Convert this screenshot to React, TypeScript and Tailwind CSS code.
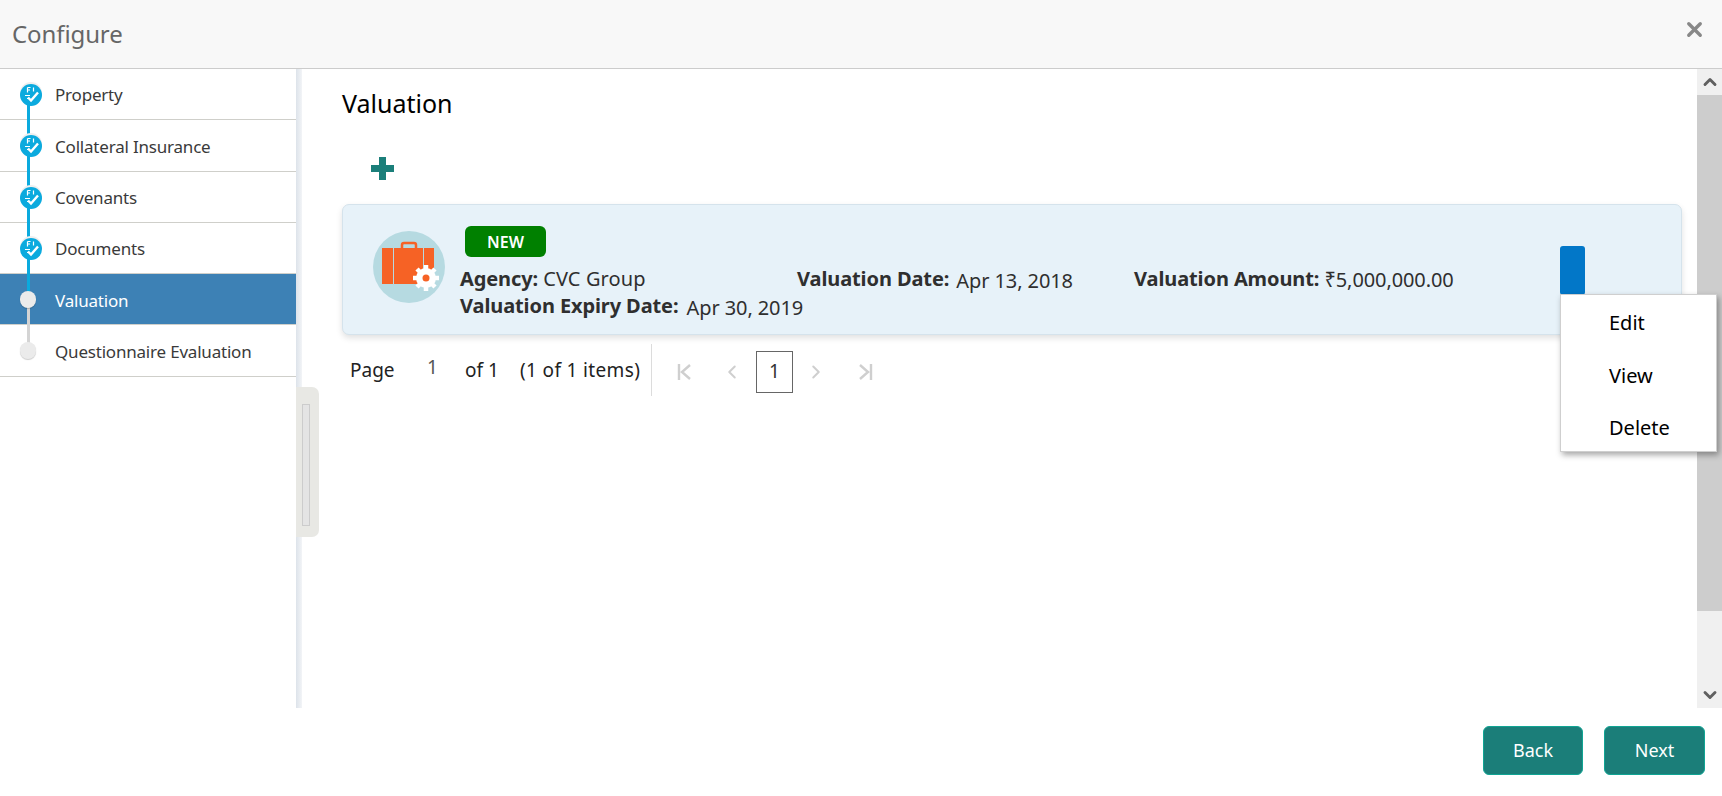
import { ChevronLeft, ChevronRight, ChevronUp, ChevronDown, X } from 'lucide-react';

const FONT = "font-['Noto_Sans',sans-serif]";

const STEPS = [
  { name: 'Property', done: true },
  { name: 'Collateral Insurance', done: true },
  { name: 'Covenants', done: true },
  { name: 'Documents', done: true },
  { name: 'Valuation', done: false, active: true },
  { name: 'Questionnaire Evaluation', done: false },
];

const DoneIcon = () => (
  <svg width="24" height="26" viewBox="0 0 24 26" className="block">
    <circle cx="12" cy="12" r="11" fill="#efefef" />
    <circle cx="12" cy="14" r="11" fill="#0baade" />
    <path d="M8.5 6.5h3M8.5 6.5v5M8.5 9h2.5M14.5 6.5v4" stroke="#fff" strokeWidth="1.2" fill="none" />
    <path d="M6 14.5h5M8 17.5h3" stroke="#fff" strokeWidth="1.2" fill="none" />
    <path d="M9 16.5l3 3 7-8" stroke="#fff" strokeWidth="2.4" fill="none" />
  </svg>
);

const PendingDot = () => (
  <span className="block w-[16px] h-[17px] rounded-full bg-[#ebebeb] shadow-[0_1px_1px_rgba(0,0,0,0.2)]"></span>
);

const Sidebar = () => (
  <aside className="relative w-[296px] shrink-0 bg-white">
    {STEPS.map((step, i) => (
      <div
        key={step.name}
        className={`relative flex items-center h-[51.3px] border-b border-[#cfcfca] ${step.active ? 'bg-[#3d81b5] text-white' : 'text-[#3a3a3a]'}`}
      >
        {i < 5 && (
          <span className={`absolute left-[27px] top-[26px] bottom-[-26px] w-[3px] z-10 ${step.done ? 'bg-[#0baade]' : 'bg-[#d4d4d4]'}`}></span>
        )}
        {i === 3 && <span className="absolute left-[27px] top-[26px] h-[27px] w-[3px] z-10 bg-[#0baade]"></span>}
        <div className="relative z-20 w-[55px] pl-[19px] shrink-0">
          {step.done ? <DoneIcon /> : <div className="ml-[1px]"><PendingDot /></div>}
        </div>
        <span className="text-[17px] tracking-[-0.2px] mt-[2px]">{step.name}</span>
      </div>
    ))}
  </aside>
);

const BriefcaseLogo = () => (
  <svg width="72" height="72" viewBox="0 0 72 72" className="shrink-0">
    <circle cx="36" cy="36" r="36" fill="#b6dae1" />
    <path d="M29 17v-3a2 2 0 0 1 2-2h10a2 2 0 0 1 2 2v3" fill="none" stroke="#f66225" strokeWidth="2.5" />
    <rect x="9" y="17" width="11" height="36" fill="#f66225" />
    <rect x="21" y="17" width="29" height="36" fill="#f66225" />
    <rect x="51" y="17" width="10" height="36" fill="#f66225" />
    <circle cx="53" cy="47" r="10" fill="#fff" />
    <g stroke="#fff" strokeWidth="4.5">
      <path d="M53 34v26M40 47h26M44 38l18 18M62 38L44 56" />
    </g>
    <circle cx="53" cy="47" r="3.5" fill="#f66225" />
  </svg>
);

const FirstIcon = () => (
  <svg width="16" height="18" viewBox="0 0 16 18" fill="none" stroke="#cfcfcf" strokeWidth="2.4">
    <path d="M2 1v16M13 2L5 9l8 7" />
  </svg>
);

const LastIcon = () => (
  <svg width="16" height="18" viewBox="0 0 16 18" fill="none" stroke="#cfcfcf" strokeWidth="2.4">
    <path d="M14 1v16M3 2l8 7-8 7" />
  </svg>
);

const Pager = () => (
  <div className="flex items-center h-[52px] mt-[9px] text-[#222] text-[19px]">
    <span className="ml-[8px] w-[77px]">Page</span>
    <span className="w-[38px] text-[#555] -mt-[6px]">1</span>
    <span className="w-[55px]">of 1</span>
    <span className="w-[131px] whitespace-nowrap tracking-[0.35px]">(1 of 1 items)</span>
    <div className="h-[52px] pt-[3px] border-l border-[#dcdcdc] flex items-center pl-[25px]">
      <FirstIcon />
      <ChevronLeft size={22} strokeWidth={2.2} color="#cfcfcf" className="ml-[28px]" />
      <span className="flex items-center justify-center w-[37px] h-[42px] ml-[13px] border border-[#666] text-[#333] text-[19px]">1</span>
      <ChevronRight size={22} strokeWidth={2.2} color="#cfcfcf" className="ml-[12px]" />
      <span className="ml-[30px]"><LastIcon /></span>
    </div>
  </div>
);

const ValuationCard = () => (
  <div className="relative flex h-[131px] w-[1340px] pl-[30px] bg-[#e7f2f9] border border-[#d5e3ec] rounded-[7px] shadow-[0_3px_6px_rgba(0,0,0,0.12)]">
    <div className="pt-[26px]">
      <BriefcaseLogo />
    </div>
    <div className="ml-[15px] pt-[21px] text-[#2f2f2f] text-[20px]">
      <span className="block ml-[5px] w-[81px] h-[31px] leading-[33px] rounded-[6px] bg-[#008000] text-white text-center text-[16px] font-semibold">NEW</span>
      <div className="flex mt-[8px] h-[28px] leading-[28px] whitespace-nowrap tracking-[-0.1px]">
        <div className="w-[337px]"><b>Agency:</b> <span className="tracking-[0.1px]">CVC Group</span></div>
        <div className="w-[337px]"><b>Valuation Date:</b> <span className="ml-[2px] align-[-2px]">Apr 13, 2018</span></div>
        <div><b>Valuation Amount:</b> <span className="align-[-1px]">₹5,000,000.00</span></div>
      </div>
      <div className="h-[26px] leading-[26px] whitespace-nowrap tracking-[-0.1px]"><b>Valuation Expiry Date:</b> <span className="ml-[3px] align-[-2px]">Apr 30, 2019</span></div>
    </div>
    <button className="absolute left-[1217px] top-[41px] w-[25px] h-[49px] rounded-[3px] bg-[#0277c8]"></button>
  </div>
);

const ActionMenu = () => (
  <div className="absolute left-[1560px] top-[294px] z-30 w-[157px] h-[158px] pt-[3px] bg-white border border-[#cfcfcf] shadow-[2px_3px_6px_rgba(0,0,0,0.35)] text-black text-[20px]">
    {['Edit', 'View', 'Delete'].map((item) => (
      <div key={item} className="h-[52.5px] leading-[50px] pl-[48px]">{item}</div>
    ))}
  </div>
);

const Scrollbar = () => (
  <div className="flex flex-col w-[25px] shrink-0 bg-[#f0f0f0]">
    <div className="flex items-center justify-center h-[26px] text-[#606060]">
      <ChevronUp size={20} strokeWidth={3.5} />
    </div>
    <div className="h-[516px] bg-[#cdcdcd]"></div>
    <div className="flex-1"></div>
    <div className="flex items-center justify-center h-[26px] text-[#606060]">
      <ChevronDown size={20} strokeWidth={3.5} />
    </div>
  </div>
);

export default function App() {
  return (
    <div className={`relative flex flex-col w-[1722px] h-[796px] overflow-hidden bg-white ${FONT}`}>
      <header className="flex items-center justify-between h-[69px] shrink-0 pl-[12px] pr-[16px] bg-[#f8f8f8] border-b border-[#cccccc]">
        <h1 className="text-[24px] tracking-[-0.1px] text-[#666]">Configure</h1>
        <X size={23} strokeWidth={3.5} color="#888" className="-mt-[10px]" />
      </header>

      <div className="relative flex flex-1 min-h-0">
        <Sidebar />
        <div className="w-[6px] shrink-0 bg-gradient-to-r from-[#dde3ea] to-[#f2f4f7]"></div>
        <main className="flex-1 pl-[40px]">
          <h2 className="text-[25px] leading-[36px] mt-[16px] text-black">Valuation</h2>
          <div className="mt-[36px] mb-[24px] ml-[29px] h-[23px] w-[23px] relative">
            <span className="absolute left-0 top-[8px] w-[23px] h-[7px] bg-[#1b7f7a]"></span>
            <span className="absolute left-[8px] top-0 w-[7px] h-[23px] bg-[#1b7f7a]"></span>
          </div>
          <ValuationCard />
          <Pager />
        </main>
        <Scrollbar />

        {/* Collapse handle on the sidebar edge */}
        <div className="absolute left-[296px] top-[318px] w-[23px] h-[150px] z-20 flex items-center pl-[6px] bg-[#e8e8e4] rounded-r-[7px]">
          <div className="w-[8px] h-[122px] mt-[5px] border border-[#cccccc] bg-[#e4e4e4]"></div>
        </div>
      </div>

      <footer className="flex items-center justify-end gap-[21px] h-[88px] shrink-0 pr-[17px] pb-[4px] bg-white">
        <button className="w-[100px] h-[49px] rounded-[6px] bg-[#1b7e79] border border-[#10a594] text-white text-[18px]">Back</button>
        <button className="w-[101px] h-[49px] rounded-[6px] bg-[#1b7e79] border border-[#10a594] text-white text-[18px]">Next</button>
      </footer>

      <ActionMenu />
    </div>
  );
}
